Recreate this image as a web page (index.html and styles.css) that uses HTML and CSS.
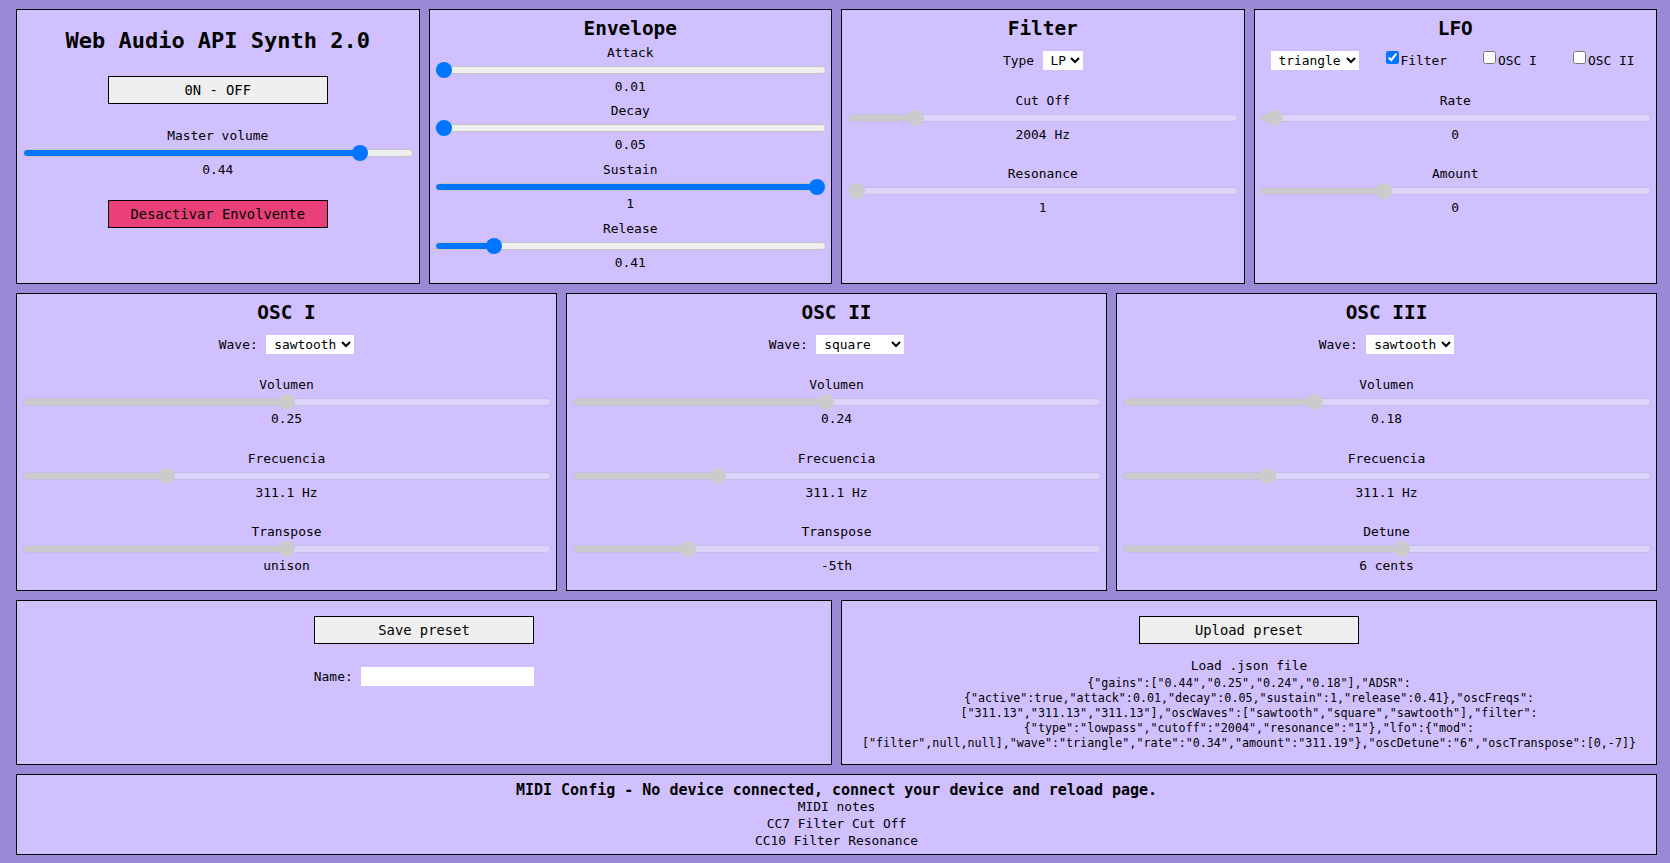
FILE: index.html
```html
<!DOCTYPE html>
<html lang="es">
<head>
<meta charset="utf-8">
<title>Web Audio API Synth 2.0</title>
<link rel="stylesheet" href="styles.css">
</head>
<body>
<main class="app">
  <div class="row row-top">
    <section class="panel panel-main">
      <h1 class="main-title">Web Audio API Synth 2.0</h1>
      <button class="btn btn-power">0N - OFF</button>
      <div class="ctl ctl-master">
        <label class="ctl-label">Master volume</label>
        <input class="range" type="range" min="0" max="1" step="0.001" value="0.882" style="--p:0.882">
        <div class="ctl-value">0.44</div>
      </div>
      <button class="btn btn-pink">Desactivar Envolvente</button>
    </section>

    <section class="panel">
      <h2 class="panel-title">Envelope</h2>
      <div class="env-list">
        <div class="ctl">
          <label class="ctl-label">Attack</label>
          <input class="range" type="range" min="0" max="1" step="0.001" value="0" style="--p:0">
          <div class="ctl-value">0.01</div>
        </div>
        <div class="ctl">
          <label class="ctl-label">Decay</label>
          <input class="range" type="range" min="0" max="1" step="0.001" value="0" style="--p:0">
          <div class="ctl-value">0.05</div>
        </div>
        <div class="ctl">
          <label class="ctl-label">Sustain</label>
          <input class="range" type="range" min="0" max="1" step="0.001" value="1" style="--p:1">
          <div class="ctl-value">1</div>
        </div>
        <div class="ctl">
          <label class="ctl-label">Release</label>
          <input class="range" type="range" min="0" max="1" step="0.001" value="0.133" style="--p:0.133">
          <div class="ctl-value">0.41</div>
        </div>
      </div>
    </section>

    <section class="panel">
      <h2 class="panel-title">Filter</h2>
      <div class="field-row">
        <span>Type</span>
        <select class="sel sel-type"><option>LP</option><option>HP</option><option>BP</option></select>
      </div>
      <div class="ctl-list">
        <div class="ctl">
          <label class="ctl-label">Cut Off</label>
          <input class="range range-off" type="range" disabled min="0" max="1" step="0.001" value="0.16" style="--p:0.16">
          <div class="ctl-value">2004 Hz</div>
        </div>
        <div class="ctl">
          <label class="ctl-label">Resonance</label>
          <input class="range range-off" type="range" disabled min="0" max="1" step="0.001" value="0" style="--p:0">
          <div class="ctl-value">1</div>
        </div>
      </div>
    </section>

    <section class="panel">
      <h2 class="panel-title">LFO</h2>
      <div class="lfo-row">
        <select class="sel sel-wave"><option>sine</option><option>square</option><option>sawtooth</option><option selected>triangle</option></select>
        <label class="check check-first"><input class="check-box" type="checkbox" checked>Filter</label>
        <label class="check"><input class="check-box" type="checkbox">OSC I</label>
        <label class="check"><input class="check-box" type="checkbox">OSC II</label>
      </div>
      <div class="ctl-list">
        <div class="ctl">
          <label class="ctl-label">Rate</label>
          <input class="range range-off" type="range" disabled min="0" max="1" step="0.001" value="0.017" style="--p:0.017">
          <div class="ctl-value">0</div>
        </div>
        <div class="ctl">
          <label class="ctl-label">Amount</label>
          <input class="range range-off" type="range" disabled min="0" max="1" step="0.001" value="0.308" style="--p:0.308">
          <div class="ctl-value">0</div>
        </div>
      </div>
    </section>
  </div>

  <div class="row row-osc">
    <section class="panel">
      <h2 class="panel-title">OSC I</h2>
      <div class="field-row">
        <span>Wave:</span>
        <select class="sel sel-wave"><option>sine</option><option>square</option><option selected>sawtooth</option><option>triangle</option></select>
      </div>
      <div class="ctl-list ctl-list-osc">
        <div class="ctl">
          <label class="ctl-label">Volumen</label>
          <input class="range range-off" type="range" disabled min="0" max="1" step="0.001" value="0.5" style="--p:0.5">
          <div class="ctl-value">0.25</div>
        </div>
        <div class="ctl">
          <label class="ctl-label">Frecuencia</label>
          <input class="range range-off" type="range" disabled min="0" max="1" step="0.001" value="0.265" style="--p:0.265">
          <div class="ctl-value">311.1 Hz</div>
        </div>
        <div class="ctl">
          <label class="ctl-label">Transpose</label>
          <input class="range range-off" type="range" disabled min="0" max="1" step="0.001" value="0.5" style="--p:0.5">
          <div class="ctl-value">unison</div>
        </div>
      </div>
    </section>

    <section class="panel">
      <h2 class="panel-title">OSC II</h2>
      <div class="field-row">
        <span>Wave:</span>
        <select class="sel sel-wave"><option>sine</option><option selected>square</option><option>sawtooth</option><option>triangle</option></select>
      </div>
      <div class="ctl-list ctl-list-osc">
        <div class="ctl">
          <label class="ctl-label">Volumen</label>
          <input class="range range-off" type="range" disabled min="0" max="1" step="0.001" value="0.48" style="--p:0.48">
          <div class="ctl-value">0.24</div>
        </div>
        <div class="ctl">
          <label class="ctl-label">Frecuencia</label>
          <input class="range range-off" type="range" disabled min="0" max="1" step="0.001" value="0.267" style="--p:0.267">
          <div class="ctl-value">311.1 Hz</div>
        </div>
        <div class="ctl">
          <label class="ctl-label">Transpose</label>
          <input class="range range-off" type="range" disabled min="0" max="1" step="0.001" value="0.208" style="--p:0.208">
          <div class="ctl-value">-5th</div>
        </div>
      </div>
    </section>

    <section class="panel">
      <h2 class="panel-title">OSC III</h2>
      <div class="field-row">
        <span>Wave:</span>
        <select class="sel sel-wave"><option>sine</option><option>square</option><option selected>sawtooth</option><option>triangle</option></select>
      </div>
      <div class="ctl-list ctl-list-osc">
        <div class="ctl">
          <label class="ctl-label">Volumen</label>
          <input class="range range-off" type="range" disabled min="0" max="1" step="0.001" value="0.36" style="--p:0.36">
          <div class="ctl-value">0.18</div>
        </div>
        <div class="ctl">
          <label class="ctl-label">Frecuencia</label>
          <input class="range range-off" type="range" disabled min="0" max="1" step="0.001" value="0.267" style="--p:0.267">
          <div class="ctl-value">311.1 Hz</div>
        </div>
        <div class="ctl">
          <label class="ctl-label">Detune</label>
          <input class="range range-off" type="range" disabled min="0" max="1" step="0.001" value="0.531" style="--p:0.531">
          <div class="ctl-value">6 cents</div>
        </div>
      </div>
    </section>
  </div>

  <div class="row row-preset">
    <section class="panel panel-preset">
      <button class="btn btn-preset">Save preset</button>
      <div class="field-row field-name">
        <span>Name:</span>
        <input class="name-input" type="text">
      </div>
    </section>
    <section class="panel panel-preset">
      <button class="btn btn-preset">Upload preset</button>
      <div class="load-label">Load .json file</div>
      <div class="json">{"gains":["0.44","0.25","0.24","0.18"],"ADSR":<br>{"active":true,"attack":0.01,"decay":0.05,"sustain":1,"release":0.41},"oscFreqs":<br>["311.13","311.13","311.13"],"oscWaves":["sawtooth","square","sawtooth"],"filter":<br>{"type":"lowpass","cutoff":"2004","resonance":"1"},"lfo":{"mod":<br>["filter",null,null],"wave":"triangle","rate":"0.34","amount":"311.19"},"oscDetune":"6","oscTranspose":[0,-7]}</div>
    </section>
  </div>

  <section class="panel panel-midi">
    <h3 class="midi-title">MIDI Config - No device connected, connect your device and reload page.</h3>
    <div class="midi-line">MIDI notes</div>
    <div class="midi-line">CC7 Filter Cut Off</div>
    <div class="midi-line">CC10 Filter Resonance</div>
  </section>
</main>
</body>
</html>
```

FILE: styles.css
```css
* {
  box-sizing: border-box;
}

html,
body {
  margin: 0;
  padding: 0;
}

body {
  background: #9b88d6;
  font-family: "DejaVu Sans Mono", "Liberation Mono", monospace;
  font-size: 12.9px;
  color: #000;
}

.app {
  display: grid;
  grid-template-rows: 275px 298px 165px 81px;
  row-gap: 9px;
  padding: 9px 13px 0 16px;
  height: 863px;
}

.row {
  display: grid;
  column-gap: 9px;
  min-height: 0;
}

.row-top {
  grid-template-columns: repeat(4, minmax(0, 1fr));
}

.row-osc {
  grid-template-columns: repeat(3, minmax(0, 1fr));
}

.row-preset {
  grid-template-columns: repeat(2, minmax(0, 1fr));
}

.panel {
  background: #d0c0ff;
  border: 1px solid #000;
  display: flex;
  flex-direction: column;
  align-items: center;
  text-align: center;
  padding-top: 7px;
  min-width: 0;
}

.main-title {
  margin: 10px 0 0;
  font-size: 22px;
  line-height: 28px;
  font-weight: bold;
}

.panel-title {
  margin: 0;
  font-size: 19.4px;
  line-height: 24px;
  font-weight: bold;
}

.btn {
  display: block;
  width: 220px;
  height: 28px;
  margin-top: 22px;
  padding: 0;
  border: 1px solid #000;
  border-radius: 0;
  background: #efefef;
  color: #000;
  font-family: inherit;
  font-size: 13.8px;
  line-height: 26px;
}

.btn-power {
  margin-top: 21px;
}

.btn-pink {
  background: #e9407a;
  margin-top: 22.5px;
}

.ctl {
  width: 100%;
  display: flex;
  flex-direction: column;
  align-items: center;
}

.ctl-master {
  margin-top: 23.5px;
}

.ctl-label,
.ctl-value {
  display: block;
  line-height: 16px;
  height: 16px;
}

.env-list {
  width: 100%;
  display: flex;
  flex-direction: column;
  gap: 8.7px;
  margin-top: 3.8px;
}

.ctl-list {
  width: 100%;
  display: flex;
  flex-direction: column;
  gap: 23.3px;
  margin-top: 23px;
}

.ctl-list-osc {
  gap: 23.6px;
  margin-top: 23.3px;
}

/* range sliders */
.range {
  -webkit-appearance: none;
  appearance: none;
  display: block;
  width: calc(100% - 11px);
  height: 16px;
  margin: 1px 0;
  padding: 0;
  background: transparent;
  --fill: #0075ff;
  --rest: #efefef;
  --edge: #c4c4c4;
  --knob: #0075ff;
}

.range::-webkit-slider-runnable-track {
  height: 8px;
  box-sizing: border-box;
  border: 1px solid var(--edge);
  border-radius: 4px;
  background: linear-gradient(to right, var(--fill) 0, var(--fill) calc(8px + var(--p) * (100% - 16px)), var(--rest) calc(8px + var(--p) * (100% - 16px)), var(--rest) 100%);
}

.range::-webkit-slider-thumb {
  -webkit-appearance: none;
  appearance: none;
  width: 16px;
  height: 16px;
  margin-top: -5px;
  border: none;
  border-radius: 50%;
  background: var(--knob);
}

.range-off {
  --fill: #cbcbcb;
  --rest: #ddd4fb;
  --edge: #c6bde6;
  --knob: #cbcbcb;
}

/* selects & fields */
.field-row {
  display: flex;
  align-items: center;
  justify-content: center;
  gap: 8.5px;
  height: 19px;
  margin-top: 10px;
  line-height: 19px;
}

.sel {
  height: 19px;
  border: none;
  border-radius: 0;
  background: #fff;
  color: #000;
  padding: 0 0 0 4px;
  font-family: inherit;
  font-size: 12.9px;
}

.sel-wave {
  width: 88px;
}

.sel-type {
  width: 40px;
}

.lfo-row {
  align-self: stretch;
  display: flex;
  align-items: center;
  height: 19px;
  margin-top: 10px;
  padding-left: 16px;
}

.check {
  display: inline-flex;
  align-items: center;
  margin-left: 36px;
  line-height: 19px;
}

.check-first {
  margin-left: 27px;
}

.check-box {
  width: 13px;
  height: 13px;
  margin: 0 2px 6px 0;
}

/* presets */
.panel-preset {
  padding-top: 15px;
}

.btn-preset {
  margin-top: 0;
}

.field-name {
  margin-top: 23px;
}

.name-input {
  width: 173px;
  height: 19px;
  border: none;
  border-radius: 0;
  padding: 0 2px;
  background: #fff;
  font-family: inherit;
  font-size: 12.9px;
}

.load-label {
  margin-top: 13px;
  line-height: 18px;
}

.json {
  margin-top: 1px;
  font-size: 11.7px;
  line-height: 15px;
  white-space: nowrap;
}

/* midi */
.panel-midi {
  padding-top: 6px;
}

.midi-title {
  margin: 0;
  font-size: 15px;
  line-height: 19px;
  font-weight: bold;
}

.midi-title + .midi-line {
  margin-top: -1px;
}

.midi-line {
  line-height: 16.8px;
}
```
